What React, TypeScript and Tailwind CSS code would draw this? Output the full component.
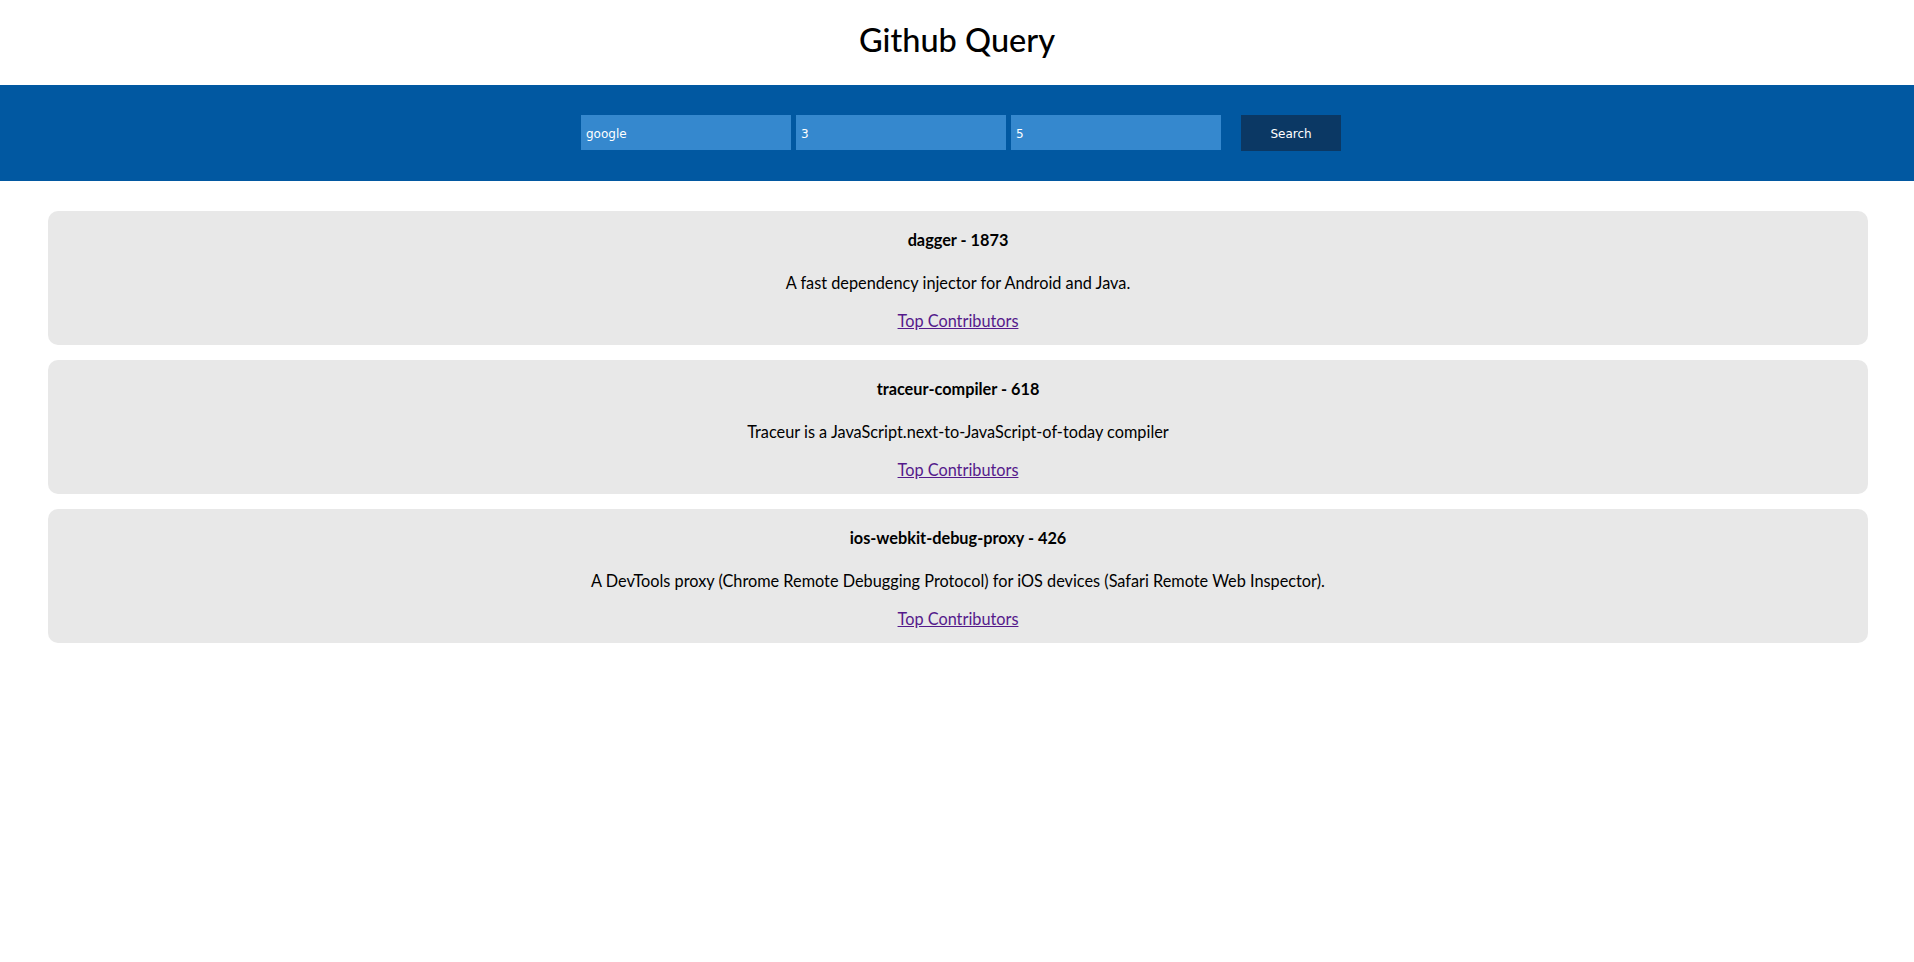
import React from "react";

const repos = [
  { name: "dagger", stars: 1873, desc: "A fast dependency injector for Android and Java." },
  { name: "traceur-compiler", stars: 618, desc: "Traceur is a JavaScript.next-to-JavaScript-of-today compiler" },
  {
    name: "ios-webkit-debug-proxy",
    stars: 426,
    desc: "A DevTools proxy (Chrome Remote Debugging Protocol) for iOS devices (Safari Remote Web Inspector).",
  },
];

export default function App() {
  return (
    <div className="min-h-screen bg-white text-black" style={{ fontFamily: "Lato, 'Noto Sans', sans-serif" }}>
      <div className="h-[85px] flex items-center justify-center">
        <h1 className="text-[32.5px] font-medium leading-none pb-[4px]">Github Query</h1>
      </div>
      <div className="h-[96px] bg-[#0158a1] flex justify-center pt-[30px]">
        <div className="flex items-start gap-[5px] pl-[8px]" style={{ fontFamily: "'DejaVu Sans', Verdana, sans-serif" }}>
          <input
            defaultValue="google"
            className="w-[210px] h-[35px] bg-[#3588ce] text-white text-[12px] px-[5px] pt-[2px] outline-none"
          />
          <input
            defaultValue="3"
            className="w-[210px] h-[35px] bg-[#3588ce] text-white text-[12px] px-[5px] pt-[2px] outline-none"
          />
          <input
            defaultValue="5"
            className="w-[210px] h-[35px] bg-[#3588ce] text-white text-[12px] px-[5px] pt-[2px] outline-none"
          />
          <button className="ml-[15px] w-[100px] h-[36px] bg-[#0b3864] text-white text-[12px] pt-[2px]">Search</button>
        </div>
      </div>
      <div className="ml-[48px] mr-[46px] mt-[30px] flex flex-col gap-[15px]">
        {repos.map((r) => (
          <div key={r.name} className="h-[134px] bg-[#e8e8e8] rounded-[10px] flex flex-col items-center pt-[19px] text-[16.3px]">
            <div className="leading-[20px] font-bold">
              {r.name} - {r.stars}
            </div>
            <div className="leading-[20px] mt-[23px]">{r.desc}</div>
            <a href="#" className="leading-[20px] mt-[18px] text-[#551a8b] underline">
              Top Contributors
            </a>
          </div>
        ))}
      </div>
    </div>
  );
}
